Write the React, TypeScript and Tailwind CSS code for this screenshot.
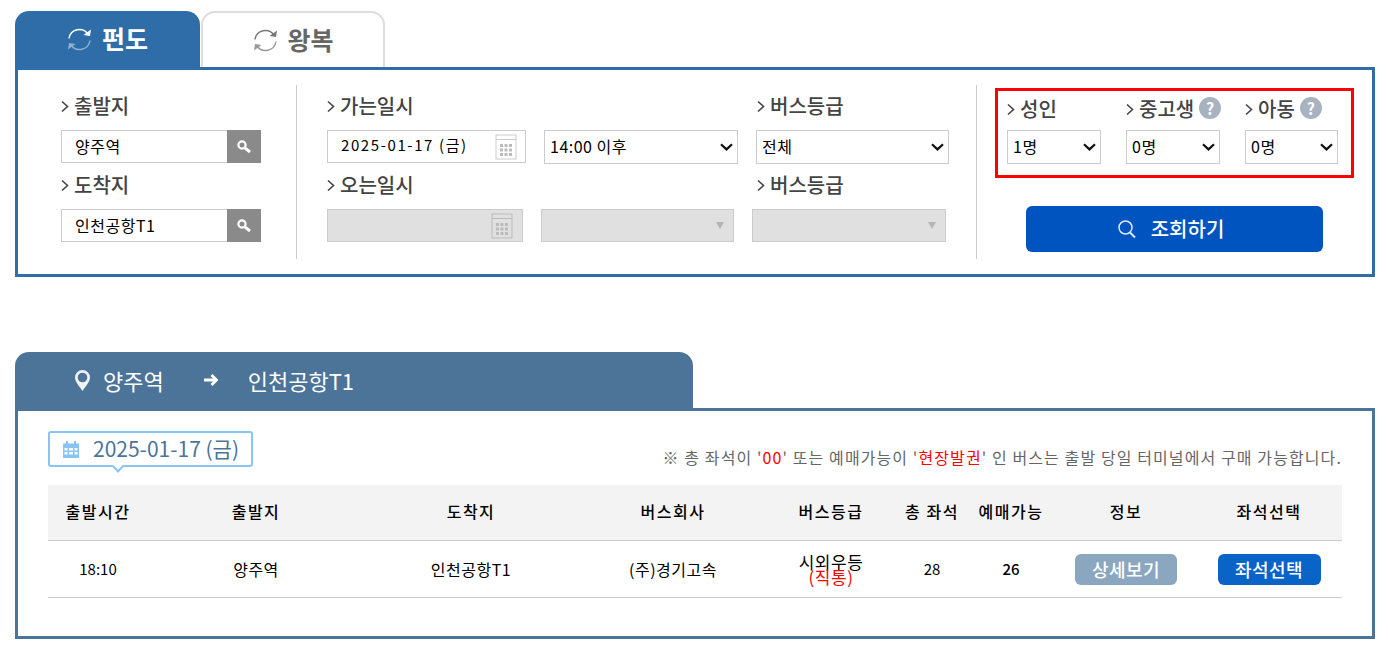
const FONT = "font-['Noto_Sans_CJK_KR','Noto_Sans',sans-serif]";

const Chevron = () => (
  <svg width="8" height="13" viewBox="0 0 8 13" className="mr-[5px] shrink-0">
    <path d="M1 1.5 6.5 6.5 1 11.5" fill="none" stroke="#444" strokeWidth="1.6" />
  </svg>
);

const Label = ({ text, help }: { text: string; help?: boolean }) => (
  <div className="flex h-6 items-center text-[20px] font-medium leading-6 text-[#444] whitespace-nowrap">
    <Chevron />
    {text}
    {help && (
      <span className="ml-[5px] flex h-[22px] w-[22px] -translate-y-[1px] items-center justify-center rounded-full bg-[#a9b2c0] text-[16px] font-bold text-white">
        ?
      </span>
    )}
  </div>
);

const Refresh = ({ top, bottom }: { top: string; bottom: string }) => (
  <svg width="27" height="27" viewBox="0 0 27 27" fill="none" className="shrink-0">
    <path d="M3 12.5A10.5 10.5 0 0 1 22 8" stroke={top} strokeWidth="1.4" />
    <path d="M25 3.5 24 10l-6.5-1z" fill={top} />
    <path d="M24 14.5A10.5 10.5 0 0 1 5 19" stroke={bottom} strokeWidth="1.4" />
    <path d="M2 23.5 3 17l6.5 1z" fill={bottom} />
  </svg>
);

const SearchField = ({ value }: { value: string }) => (
  <div className="mt-3 flex h-[33px] w-[200px]">
    <div className="flex flex-1 items-center border border-[#ccc] border-r-0 pl-[13px] text-[16px] tracking-[0.5px] text-black">
      <span className="-translate-y-[1px]">{value}</span>
    </div>
    <div className="flex w-[34px] items-center justify-center bg-[#8a8a8a]">
      <svg width="16" height="16" viewBox="0 0 16 16" fill="none">
        <circle cx="6" cy="6" r="3.6" stroke="#fff" strokeWidth="2.2" />
        <path d="M8.8 8.8 14 13" stroke="#fff" strokeWidth="3" />
      </svg>
    </div>
  </div>
);

const CalendarIcon = ({ color, fill }: { color: string; fill: string }) => (
  <svg width="22" height="26" viewBox="0 0 22 26" fill="none">
    <rect x="1" y="1" width="20" height="24" fill="none" stroke={color} />
    <path d="M1 5.5h20" stroke={color} />
    {[5, 9.5, 14].map((x) =>
      [10, 14.5, 19].map((y) => <rect key={`${x}-${y}`} x={x} y={y} width="3" height="3" fill={fill} />),
    )}
  </svg>
);

const Select = ({ value, className }: { value: string; className: string }) => (
  <div className={`relative h-[34px] ${className}`}>
    <select
      defaultValue={value}
      className="h-full w-full appearance-none border border-[#ccc] bg-white pb-[3px] pl-[5px] text-[16px] tracking-[0.5px] text-black"
    >
      <option>{value}</option>
    </select>
    <svg width="13" height="8" viewBox="0 0 13 8" fill="none" className="pointer-events-none absolute right-[5px] top-[13px]">
      <path d="M1 1.2 6.5 6.4 12 1.2" stroke="#111" strokeWidth="2.2" />
    </svg>
  </div>
);

const DisabledSelect = ({ className }: { className: string }) => (
  <div className={`flex h-[33px] items-center justify-end border border-[#ccc] bg-[#e0e0e0] pr-[9px] ${className}`}>
    <span className="h-0 w-0 border-x-[4px] border-t-[7px] border-x-transparent border-t-[#b5b5b5]" />
  </div>
);

const columns = "grid grid-cols-[100px_216px_214px_190px_126px_76px_82px_148px_142px] items-center text-center";

const headers = ["출발시간", "출발지", "도착지", "버스회사", "버스등급", "총 좌석", "예매가능", "정보", "좌석선택"];

export default function App() {
  return (
    <div className={`${FONT} min-h-[651px] bg-white pl-[15px] pt-[11px]`}>
      <div className="w-[1360px]">
        {/* 탭 */}
        <div className="flex h-[56px]">
          <div className="flex w-[185px] items-center justify-center gap-[9px] rounded-t-[14px] bg-[#2e6da8] pr-[1px] text-[25px] font-bold text-white">
            <Refresh top="#fff" bottom="#8fb0d0" />
            펀도
          </div>
          <div className="ml-[1px] flex w-[184px] items-center justify-center gap-[8px] rounded-t-[14px] border-2 border-b-0 border-[#ddd] text-[25px] font-bold text-[#666]">
            <Refresh top="#777" bottom="#999" />
            왕복
          </div>
        </div>

        {/* 검색 */}
        <div className="flex h-[210px] border-[3px] border-[#2e6da8] pt-[15px]">
          <div className="h-[174px] w-[279px] border-r border-[#ccc] pl-[43px] pt-[9px]">
            <Label text="출발지" />
            <SearchField value="양주역" />
            <div className="mt-[10px]">
              <Label text="도착지" />
            </div>
            <SearchField value="인천공항T1" />
          </div>

          <div className="h-[174px] w-[680px] border-r border-[#ccc] pl-[30px] pt-[9px]">
            <div className="flex">
              <div className="w-[430px]">
                <Label text="가는일시" />
              </div>
              <Label text="버스등급" />
            </div>
            <div className="mt-3 flex">
              <div className="flex h-[33px] w-[199px] items-center justify-between border border-[#ccc] pl-[13px] pr-[8px] text-[15px] tracking-[1.6px] text-black">
                <span className="-translate-y-[1px]">2025-01-17 (금)</span>
                <CalendarIcon color="#ccc" fill="#bbb" />
              </div>
              <Select value="14:00 이후" className="ml-[18px] w-[194px]" />
              <Select value="전체" className="ml-[18px] w-[193px]" />
            </div>
            <div className="mt-[9px] flex">
              <div className="w-[430px]">
                <Label text="오는일시" />
              </div>
              <Label text="버스등급" />
            </div>
            <div className="mt-3 flex">
              <div className="flex h-[33px] w-[196px] items-center justify-end border border-[#ccc] bg-[#e0e0e0] pr-[9px]">
                <CalendarIcon color="#bbb" fill="#bbb" />
              </div>
              <DisabledSelect className="ml-[18px] w-[193px]" />
              <DisabledSelect className="ml-[18px] w-[194px]" />
            </div>
          </div>

          <div className="pl-[18px] pt-[3px]">
            <div className="flex h-[90px] w-[359px] border-[3px] border-[#f00] pl-[9px] pt-[6px]">
              <div className="w-[119px]">
                <Label text="성인" />
                <Select value="1명" className="mt-[9px] w-[94px]" />
              </div>
              <div className="w-[119px]">
                <Label text="중고생" help />
                <Select value="0명" className="mt-[9px] w-[94px]" />
              </div>
              <div>
                <Label text="아동" help />
                <Select value="0명" className="mt-[9px] w-[93px]" />
              </div>
            </div>
            <div className="ml-[31px] mt-[28px] flex h-[46px] w-[297px] items-center justify-center gap-[14px] rounded-[6px] bg-[#0054c0] pr-[8px] text-[20px] font-medium text-white">
              <svg width="20" height="20" viewBox="0 0 20 20" fill="none">
                <circle cx="8.5" cy="8.5" r="6.5" stroke="#dfe9f7" strokeWidth="1.5" />
                <path d="M13 13.5 18 18.5" stroke="#dfe9f7" strokeWidth="2" />
              </svg>
              조회하기
            </div>
          </div>
        </div>

        {/* 결과 */}
        <div className="mt-[75px] flex h-[56px] w-[678px] items-center rounded-t-[14px] bg-[#4c7499] pl-[60px] text-[22px] text-white">
          <svg width="15" height="21" viewBox="0 0 15 21" className="shrink-0">
            <path
              fillRule="evenodd"
              d="M7.5 0A7.5 7.5 0 0 0 0 7.5C0 12 5 17 7.5 21 10 17 15 12 15 7.5A7.5 7.5 0 0 0 7.5 0Zm0 2.7a4.8 4.8 0 1 1 0 9.6 4.8 4.8 0 0 1 0-9.6Z"
              fill="#eef2f6"
            />
          </svg>
          <span className="ml-[13px]">양주역</span>
          <svg width="14" height="12" viewBox="0 0 14 12" fill="none" className="ml-[40px]">
            <path d="M0 6h12M7.5 1l5 5-5 5" stroke="#fff" strokeWidth="2.8" />
          </svg>
          <span className="ml-[30px]">인천공항T1</span>
        </div>

        <div className="h-[231px] border-[3px] border-[#4c7499] px-[30px] pt-[20px]">
          <div className="flex items-end justify-between">
            <div className="relative flex h-[36px] w-[205px] items-center rounded-[3px] border-2 border-[#8ac4f5] pl-[13px] text-[21px] text-[#4c7499]">
              <svg width="16" height="17" viewBox="0 0 16 17" className="mr-[14px] shrink-0">
                <path d="M0 2.5h3V0h2v2.5h6V0h2v2.5h3V17H0z" fill="#8ac4f5" />
                <path d="M1.5 7h3v2.5h-3zM6 7h4v2.5H6zM11.5 7h3v2.5h-3zM1.5 11h3v2.5h-3zM6 11h4v2.5H6zM11.5 11h3v2.5h-3z" fill="#fff" />
              </svg>
              2025-01-17 (금)
              <span className="absolute -bottom-[6px] left-[64px] h-[8px] w-[8px] rotate-45 border-b-2 border-r-2 border-[#8ac4f5] bg-white" />
            </div>
            <p className="text-[16px] leading-5 tracking-[1.1px] text-[#666]">
              ※ 총 좌석이 '<span className="text-[#f00]">00</span>' 또는 예매가능이 '
              <span className="text-[#f00]">현장발권</span>' 인 버스는 출발 당일 터미널에서 구매 가능합니다.
            </p>
          </div>

          <div className={`${columns} mt-[18px] h-[56px] border-b border-[#ccc] bg-[#f3f3f3] pb-[3px] text-[16px] font-medium tracking-[1.5px] text-black`}>
            {headers.map((h, i) => (
              <div key={h} className={i === 8 ? "pr-[4px]" : ""}>
                {h}
              </div>
            ))}
          </div>
          <div className={`${columns} h-[57px] border-b border-[#ccc] text-[16px] tracking-[0.5px] text-black`}>
            <div className="text-[15px] tracking-normal">18:10</div>
            <div>양주역</div>
            <div>인천공항T1</div>
            <div>(주)경기고속</div>
            <div className="text-[17px] leading-[15px]">
              시외우등
              <div className="text-[#f00]">(직통)</div>
            </div>
            <div className="text-[15px] tracking-normal">28</div>
            <div className="text-[15px] font-medium tracking-normal">26</div>
            <div className="flex justify-center">
              <span className="flex h-[31px] w-[102px] items-center justify-center rounded-[6px] bg-[#8ba7c0] text-[18px] font-medium text-white">
                상세보기
              </span>
            </div>
            <div className="flex justify-center pr-[4px]">
              <span className="flex h-[31px] w-[103px] items-center justify-center rounded-[6px] bg-[#0a64c8] text-[18px] font-medium text-white">
                좌석선택
              </span>
            </div>
          </div>
        </div>
      </div>
    </div>
  );
}
